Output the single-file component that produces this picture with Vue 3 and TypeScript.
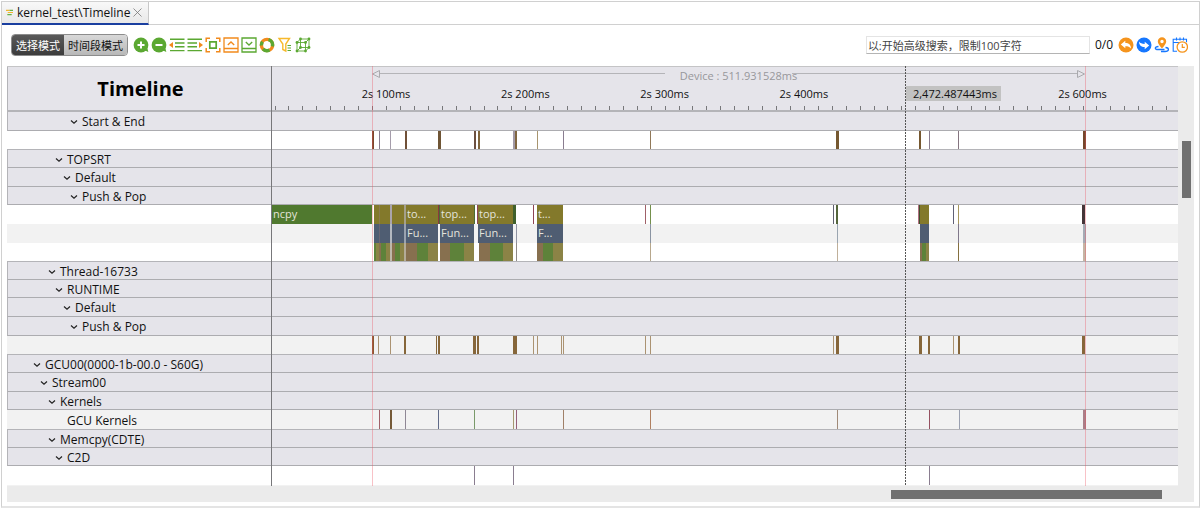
<script setup lang="ts">
import { ref } from 'vue'

interface Bar { x: number; w: number; c: string; t?: string }
interface Row { kind: 'group' | 'lane'; label?: string; level: number; alt?: boolean; bars?: Bar[] }

const VIEW = 906
const pct = (v: number): string => `${(v / VIEW) * 100}%`
const msToX = (ms: number): number => 114 + (ms - 2100) * 1.393

const mode = ref<'select' | 'range'>('select')
const query = ref('')

const ticks = Array.from({ length: 65 }, (_, i) => 2020 + i * 10)
const majors = [100, 200, 300, 400, 600]

const b = (x: number, w: number, c: string, t?: string): Bar => ({ x, w, c, t })
const group = (label: string, level: number): Row => ({ kind: 'group', label, level })
const lane = (bars: Bar[], alt = false, label = '', level = 0): Row => ({ kind: 'lane', label, level, alt, bars })

const GREEN = '#50792f'
const OLIVE = '#83792b'
const SLATE = '#4f5d72'
const BROWN = '#87704f'
const LEAF = '#5e823a'
const MOSS = '#8b8346'
const RUN = '#86663a'
const RUNL = '#ab9372'
const MAUVE = '#8a7d90'

const rows: Row[] = [
  group('Start & End', 5),
  lane([
    b(100, 2, '#7a4a2c'), b(107, 1, MAUVE), b(118, 1, '#a59dab'), b(133, 2, '#705038'), b(166, 3, '#6f5535'),
    b(202, 2, '#6c5040'), b(206, 2, '#80653c'), b(241, 2, '#a29aa6'), b(243, 2, '#806640'), b(265, 1, '#a8956f'),
    b(291, 1, MAUVE), b(378, 1, '#907858'), b(564, 3, '#755830'), b(647, 2, '#765830'), b(657, 1, MAUVE),
    b(686, 1, '#857580'), b(811, 3, '#74482c')
  ]),
  group('TOPSRT', 3),
  group('Default', 4),
  group('Push & Pop', 5),
  lane([
    b(0, 100, GREEN, 'ncpy'), b(102, 16, OLIVE), b(107, 1, '#8a7a50'), b(118, 2, '#aaa4ac'), b(120, 12, OLIVE), b(132, 2, '#a5a08a'),
    b(134, 32, OLIVE, 'to...'), b(166, 1, '#8a3a3f'), b(167, 1, '#4c6a35'), b(168, 34, OLIVE, 'top...'), b(202, 1, '#4c6a35'),
    b(205, 1, '#8f4455'), b(206, 35, OLIVE, 'top...'), b(241, 3, '#3f602c'), b(261, 1, '#8f4455'), b(265, 26, OLIVE, 't...'),
    b(373, 1, '#a06068'), b(378, 1, '#74904c'), b(561, 1, '#606070'), b(564, 2, '#55663c'), b(646, 1, '#b07080'),
    b(647, 1, '#3f4f2a'), b(648, 9, OLIVE), b(681, 1, '#606075'), b(686, 1, '#a8985f'), b(810, 3, '#453538')
  ]),
  lane([
    b(102, 16, SLATE), b(107, 1, '#6a6672'), b(118, 2, '#b3b8c0'), b(120, 12, SLATE), b(132, 2, '#9aa2ae'), b(134, 32, SLATE, 'Fu...'),
    b(168, 34, SLATE, 'Fun...'), b(206, 35, SLATE, 'Fun...'), b(244, 1, '#8f93a2'), b(265, 26, SLATE, 'F...'),
    b(378, 1, '#8a94a2'), b(565, 1, '#9aa5b0'), b(648, 9, SLATE), b(686, 1, '#80788a'), b(811, 3, '#a5abb5')
  ], true),
  lane([
    b(102, 2, LEAF), b(104, 3, MOSS), b(107, 2, BROWN), b(109, 5, LEAF), b(114, 4, MOSS),
    b(118, 2, '#beb8aa'), b(120, 3, BROWN), b(123, 5, LEAF), b(128, 4, MOSS), b(132, 2, '#b4ab98'),
    b(134, 11, BROWN), b(145, 11, LEAF), b(156, 10, MOSS), b(168, 10, BROWN), b(178, 14, LEAF), b(192, 10, MOSS),
    b(207, 11, BROWN), b(218, 13, LEAF), b(231, 10, MOSS), b(244, 1, '#8f8a88'),
    b(265, 6, BROWN), b(271, 10, LEAF), b(281, 10, MOSS), b(378, 1, '#b7a78c'), b(565, 1, '#c0b09a'),
    b(648, 2, BROWN), b(650, 4, LEAF), b(654, 3, MOSS), b(686, 1, '#85703f'), b(811, 3, '#c5b5a5')
  ]),
  group('Thread-16733', 2),
  group('RUNTIME', 3),
  group('Default', 4),
  group('Push & Pop', 5),
  lane([
    b(100, 2, '#8a5a30'), b(106, 1, RUNL), b(118, 1, RUNL), b(132, 2, RUN), b(164, 1, RUN), b(166, 2, RUN),
    b(201, 3, RUN), b(205, 2, RUN), b(241, 4, RUN), b(261, 1, RUNL), b(265, 1, RUNL), b(289, 1, RUNL), b(291, 1, RUNL),
    b(373, 1, RUNL), b(378, 1, RUNL), b(561, 1, RUNL), b(564, 3, RUN), b(647, 3, RUN), b(656, 2, RUN), b(681, 1, RUNL),
    b(686, 2, RUN), b(810, 3, RUN)
  ], true),
  group('GCU00(0000-1b-00.0 - S60G)', 0),
  group('Stream00', 1),
  group('Kernels', 2),
  lane([
    b(107, 1, '#a06068'), b(118, 2, '#755a38'), b(133, 1, '#8f8795'), b(166, 1, '#606a88'), b(202, 1, '#7a9a6a'),
    b(241, 1, '#a59870'), b(244, 1, '#95607a'), b(291, 1, '#a08068'), b(378, 1, '#b08060'), b(565, 1, '#a08a78'), b(657, 1, '#955060'),
    b(687, 1, '#9aa0b0'), b(811, 3, '#a97f88')
  ], true, 'GCU Kernels', 3),
  group('Memcpy(CDTE)', 2),
  group('C2D', 3),
  lane([b(202, 1, MAUVE), b(241, 1, MAUVE), b(657, 1, MAUVE)])
]
</script>

<template>
  <main class="window">
    <nav class="tabs">
      <div class="tab">
        <svg class="tab-icon" viewBox="0 0 8 8"><path d="M0 1.500h4M2 4h6" stroke="#f3b52c" stroke-width="1.300" /><path d="M4 1.500h4M1.500 6.500h5" stroke="#66b245" stroke-width="1.300" /></svg>
        <a href="#timeline">kernel_test\Timeline</a>
        <button class="close" aria-label="Close tab">
          <svg viewBox="0 0 9 9"><path d="M.5 .5l8 8M8.500 .5l-8 8" stroke="#777" stroke-width=".8" /></svg>
        </button>
      </div>
    </nav>

    <header class="toolbar">
      <div class="modes">
        <button :class="{ on: mode === 'select' }" @click="mode = 'select'">选择模式</button>
        <button :class="{ on: mode === 'range' }" @click="mode = 'range'">时间段模式</button>
      </div>
      <div class="tools">
        <button aria-label="Zoom in"><svg viewBox="0 0 16 16"><circle cx="8" cy="8" r="7.400" fill="#5ba832" /><path d="M11 13l3.500-1.500.8 3.600z" fill="#5ba832" /><path d="M8 4.500v7M4.500 8h7" stroke="#fff" stroke-width="2" /></svg></button>
        <button aria-label="Zoom out"><svg viewBox="0 0 16 16"><circle cx="8" cy="8" r="7.400" fill="#5ba832" /><path d="M11 13l3.500-1.500.8 3.600z" fill="#5ba832" /><path d="M4.500 8h7" stroke="#fff" stroke-width="2" /></svg></button>
        <button aria-label="Shift left"><svg viewBox="0 0 16 16"><path d="M1 2.200h14.500M6 6h9.500M6 9.800h9.500M1 13.600h14.500" stroke="#5ba832" stroke-width="1.400" /><path d="M0 8l4-3v6z" fill="#f28a1c" /></svg></button>
        <button aria-label="Shift right"><svg viewBox="0 0 16 16"><path d="M.5 2.200H15M.5 6H10M.5 9.800H10M.5 13.600H15" stroke="#5ba832" stroke-width="1.400" /><path d="M16 8l-4-3v6z" fill="#f28a1c" /></svg></button>
        <button aria-label="Fit"><svg viewBox="0 0 16 16" fill="none"><path d="M1.200 5V1.200H5M11 1.200h3.800V5M14.800 11v3.800H11M5 14.800H1.200V11" stroke="#f28a1c" stroke-width="1.500" /><path d="M4.800 4.800h6.400v6.400H4.800z" stroke="#5ba832" stroke-width="1.700" /></svg></button>
        <button aria-label="Collapse"><svg viewBox="0 0 16 16" fill="none" stroke="#f28a1c" stroke-width="1.300"><path d="M1 1h14v14H1zM1 11.500h14M4.800 8L8 5l3.200 3" /></svg></button>
        <button aria-label="Expand"><svg viewBox="0 0 16 16" fill="none" stroke="#5ba832" stroke-width="1.300"><path d="M1 1h14v14H1zM1 11.500h14M4.800 5L8 8l3.200-3" /></svg></button>
        <button aria-label="Refresh"><svg viewBox="0 0 16 16" fill="none" stroke-width="3.400"><circle cx="8" cy="8" r="5.600" stroke="#f28a1c" /><path d="M9.500 2.600A5.600 5.600 0 0 1 13.400 9.400M10.500 13A5.600 5.600 0 0 1 4 12" stroke="#5ba832" /><path d="M2.400 8.500A5.600 5.600 0 0 1 3.500 4.700" stroke="#5ba832" /></svg></button>
        <button aria-label="Filter"><svg viewBox="0 0 16 16" fill="none"><path d="M2 1.500h10.500L8.800 7v7l-3-1.500V7z" stroke="#f7b92c" stroke-width="1.400" /><path d="M10.500 8.500H14M10.500 11H14M10.500 13.500H14" stroke="#5ba832" stroke-width="1.200" /></svg></button>
        <button aria-label="Topology"><svg viewBox="0 0 16 16" fill="none"><path d="M2 5.500h8.500V14H2zM2 5.500L5.500 2H14v8.500L10.500 14M10.500 5.500L14 2M5.500 2v8.500H14M2 14l3.500-3.500" stroke="#5ba832" stroke-width=".9" /><g fill="#5ba832"><circle cx="2" cy="5.500" r="1.400" /><circle cx="10.500" cy="5.500" r="1.400" /><circle cx="2" cy="14" r="1.400" /><circle cx="10.500" cy="14" r="1.400" /><circle cx="5.500" cy="2" r="1.400" /><circle cx="14" cy="2" r="1.400" /><circle cx="14" cy="10.500" r="1.400" /><circle cx="5.500" cy="10.500" r="1.400" /></g></svg></button>
      </div>
      <input v-model="query" class="search" type="text" aria-label="Search" placeholder="以:开始高级搜索，限制100字符" />
      <span class="count">0/0</span>
      <div class="tools">
        <button aria-label="Back"><svg viewBox="0 0 16 16"><circle cx="8" cy="8" r="7.500" fill="#f5941d" /><path d="M2.800 7.500L7.300 3.800v2.200c3.500 0 5.700 1.800 5.700 5.500-1.300-1.700-3-2.300-5.700-2.300v2z" fill="#fff" /></svg></button>
        <button aria-label="Forward"><svg viewBox="0 0 16 16"><circle cx="8" cy="8" r="7.500" fill="#1677ff" /><path d="M13.200 8.500L8.700 4.800v2.100C6 6.900 4.200 6.300 3 4.500c0 3.700 2.200 5.500 5.700 5.500v2.200z" fill="#fff" /></svg></button>
        <button aria-label="Route"><svg viewBox="0 0 16 16"><path d="M4.500 9.500C.5 9.800.2 12.500 4 12.500h6.500M11.500 10.500c4 .3 4 4-.5 4H7" fill="none" stroke="#1677ff" stroke-width="1.300" /><path fill-rule="evenodd" d="M8 .3a4.200 4.200 0 0 1 4.200 4.200C12.200 7 8 11.500 8 11.500S3.800 7 3.800 4.500A4.200 4.200 0 0 1 8 .3zM8 2.800a1.700 1.700 0 1 0 0 3.400 1.700 1.700 0 0 0 0-3.400z" fill="#f5941d" /></svg></button>
        <button aria-label="Schedule"><svg viewBox="0 0 16 16" fill="none"><path d="M5 14.200H1.200V2.200h13.300v3M1.200 5.500H7M4.500 .5v3M8 .5v3M11.500 .5v3" stroke="#1677ff" stroke-width="1.100" /><circle cx="10.300" cy="10" r="5.200" stroke="#f5941d" stroke-width="1.300" /><path d="M10.300 7v3.300h2.500" stroke="#f5941d" stroke-width="1.200" /></svg></button>
      </div>
    </header>

    <section class="panel">
      <div class="view">
        <div class="head">
          <h1>Timeline</h1>
          <div class="ruler">
            <span v-for="t in ticks" :key="t" class="tick" :style="{ left: pct(msToX(t)) }"></span>
            <span v-for="m in majors" :key="m" class="major" :style="{ left: pct(msToX(2000 + m)) }">2s {{ m }}ms</span>
            <div class="span" :style="{ left: pct(100), width: pct(713) }">
              <svg class="tip" viewBox="0 0 8 8"><path d="M.5 4L7.500 .5v7z" fill="none" stroke="#aaaaae" /></svg>
              <i></i><span class="device">Device : 511.931528ms</span><i></i>
              <svg class="tip" viewBox="0 0 8 8"><path d="M7.500 4L.5 .5v7z" fill="none" stroke="#aaaaae" /></svg>
            </div>
          </div>
        </div>

        <div class="rows">
          <div v-for="(r, i) in rows" :key="i" class="row" :class="[r.kind, { alt: r.alt }]">
            <div class="name" :style="{ paddingLeft: `${Math.floor(26 + r.level * 7.5)}px` }">
              <button v-if="r.kind === 'group'">
                <svg viewBox="0 0 8 6"><path d="M1 1.500L4 4.300 7 1.500" fill="none" stroke="#222" stroke-width="1.200" /></svg>{{ r.label }}
              </button>
              <span v-else-if="r.label" class="leaf">{{ r.label }}</span>
            </div>
            <div class="track">
              <span v-for="(bar, k) in r.bars" :key="k" class="bar" :style="{ left: pct(bar.x), width: pct(bar.w), background: bar.c }">{{ bar.t }}</span>
            </div>
          </div>
        </div>

        <div class="overlay">
          <span class="mark" :style="{ left: pct(100) }"></span>
          <span class="mark" :style="{ left: pct(813) }"></span>
          <span class="cursor" :style="{ left: pct(633) }"><b>2,472.487443ms</b></span>
        </div>
      </div>
      <div class="vbar"><span></span></div>
      <div class="hbar"><span></span></div>
    </section>
  </main>
</template>

<style>
body { margin: 0; background: #fff; }
</style>

<style scoped>
* { box-sizing: border-box; }
.window {
  margin: 1px 0 0 1px;
  border: 1px solid #d0d0d0;
  border-bottom: 2px solid #e4e4e4;
  padding-bottom: 4px;
  font-family: "Open Sans", "Noto Sans CJK SC", sans-serif;
  font-size: 11px;
  color: #111;
}
button { border: 0; padding: 0; margin: 0; background: none; font: inherit; color: inherit; cursor: pointer; display: flex; align-items: center; }
svg { display: block; flex: none; }

.tabs { display: flex; height: 23px; border-bottom: 1px solid #d0d0d0; }
.tab { display: flex; align-items: center; width: 147px; height: 23px; padding-left: 4px; background: linear-gradient(#f8f8f8, #e8e8e8); border-right: 1px solid #c8c8c8; border-bottom: 2px solid #1a3fa0; }
.tab a { margin-left: 4px; font-size: 12px; line-height: 20px; color: #111; text-decoration: none; white-space: nowrap; }
.tab-icon { width: 7px; height: 7px; }
.close { margin-left: 3px; }
.close svg { width: 9px; height: 9px; }

.toolbar { display: flex; align-items: center; height: 41px; padding: 0 11px 1px 9px; }
.modes { display: flex; height: 22px; margin-right: 5px; border: 1px solid #8c8c8c; border-radius: 4px; overflow: hidden; }
.modes button { padding: 0 4px; white-space: nowrap; background: linear-gradient(#d8d8d8, #b8b8b8); }
.modes .on { background: linear-gradient(#5a5a5a, #3c3c3c); color: #fff; }
.tools { display: flex; gap: 2px; }
.tools svg { width: 16px; height: 16px; }
.search { width: 224px; height: 18px; margin-left: auto; padding: 0 1px; border: 1px solid #e4e4e4; border-bottom: 1px solid #b4b4b4; outline: 0; font: inherit; color: #444; background: #fff; }
.search::placeholder { color: #444; opacity: 1; }
.count { margin: 0 5px; padding-bottom: 2px; font-size: 12px; }

.panel { display: grid; grid-template-columns: 1fr 16px; margin: 0 5px; background: #ebebeb; }
.view { position: relative; min-width: 0; background: #f2f2f2; padding-bottom: 1px; }
.head { display: grid; grid-template-columns: 264px 1fr; height: 46px; background: #e5e4ea; border-top: 1px solid #c4c4c6; border-bottom: 2px solid #b4b4b8; }
h1 { display: flex; align-items: center; justify-content: center; margin: 0; padding-left: 2px; border: 1px solid #b4b4b8; border-width: 0 0 0 1px; font-size: 20px; line-height: 28px; font-weight: 700; color: #000; }
.ruler { position: relative; margin-left: 1px; overflow: hidden; }
.tick { position: absolute; bottom: 0; width: 1px; height: 4px; background: #77777a; }
.major { position: absolute; top: 18px; transform: translateX(-50%); line-height: 18px; white-space: nowrap; color: #111; }
.span { position: absolute; top: 0; display: flex; align-items: center; height: 13px; }
.span i { flex: 1; height: 1px; background: #b4b4b8; }
.tip { width: 8px; height: 8px; }
.device { margin: 4px -5px 0 15px; line-height: 14px; color: #97979b; white-space: nowrap; }

.rows { display: grid; grid-auto-rows: minmax(0, 1fr); height: 373px; }
.row { min-height: 0; display: grid; grid-template-columns: 264px 1fr; background: #fff; }
.row.alt { background: #f2f2f2; }
.row.group { background: #e5e4ea; border-left: 1px solid #b4b4b8; border-bottom: 1px solid #acacb0; grid-template-columns: 263px 1fr; }
.lane + .group { border-top: 1px solid #b4b4b8; }
.name { display: flex; align-items: center; min-width: 0; padding-top: 2px; font-size: 12px; line-height: 16px; white-space: nowrap; }
.group .name { margin-left: -1px; }
.name svg { width: 8px; height: 6px; margin-right: 4px; }
.leaf { margin-left: 12px; }
.track { position: relative; margin-left: 1px; overflow: hidden; }
.bar { position: absolute; top: 0; bottom: 0; padding-left: 1px; overflow: hidden; line-height: 18px; white-space: nowrap; color: #e4e4dc; }

.overlay { position: absolute; top: 0; bottom: 0; left: 264px; right: 0; border-left: 1px solid #77777a; pointer-events: none; }
.mark { position: absolute; top: 0; bottom: 0; width: 1px; background: rgba(235, 80, 95, 0.35); }
.cursor { position: absolute; top: 0; bottom: 0; width: 1px; background: repeating-linear-gradient(#555 0 2px, transparent 2px 3px); }
.cursor b { position: absolute; top: 20px; left: 1px; padding: 0 4px 0 7px; background: #c2c2c2; font-weight: 400; line-height: 15px; white-space: nowrap; }

.vbar { padding: 75px 3px 0 4px; }
.vbar span { display: block; height: 57px; background: #707070; }
.hbar { grid-column: 1 / -1; height: 16px; padding: 4px 32px 0 0; }
.hbar span { display: block; width: 271px; height: 9px; margin-left: auto; background: #707070; }
</style>
